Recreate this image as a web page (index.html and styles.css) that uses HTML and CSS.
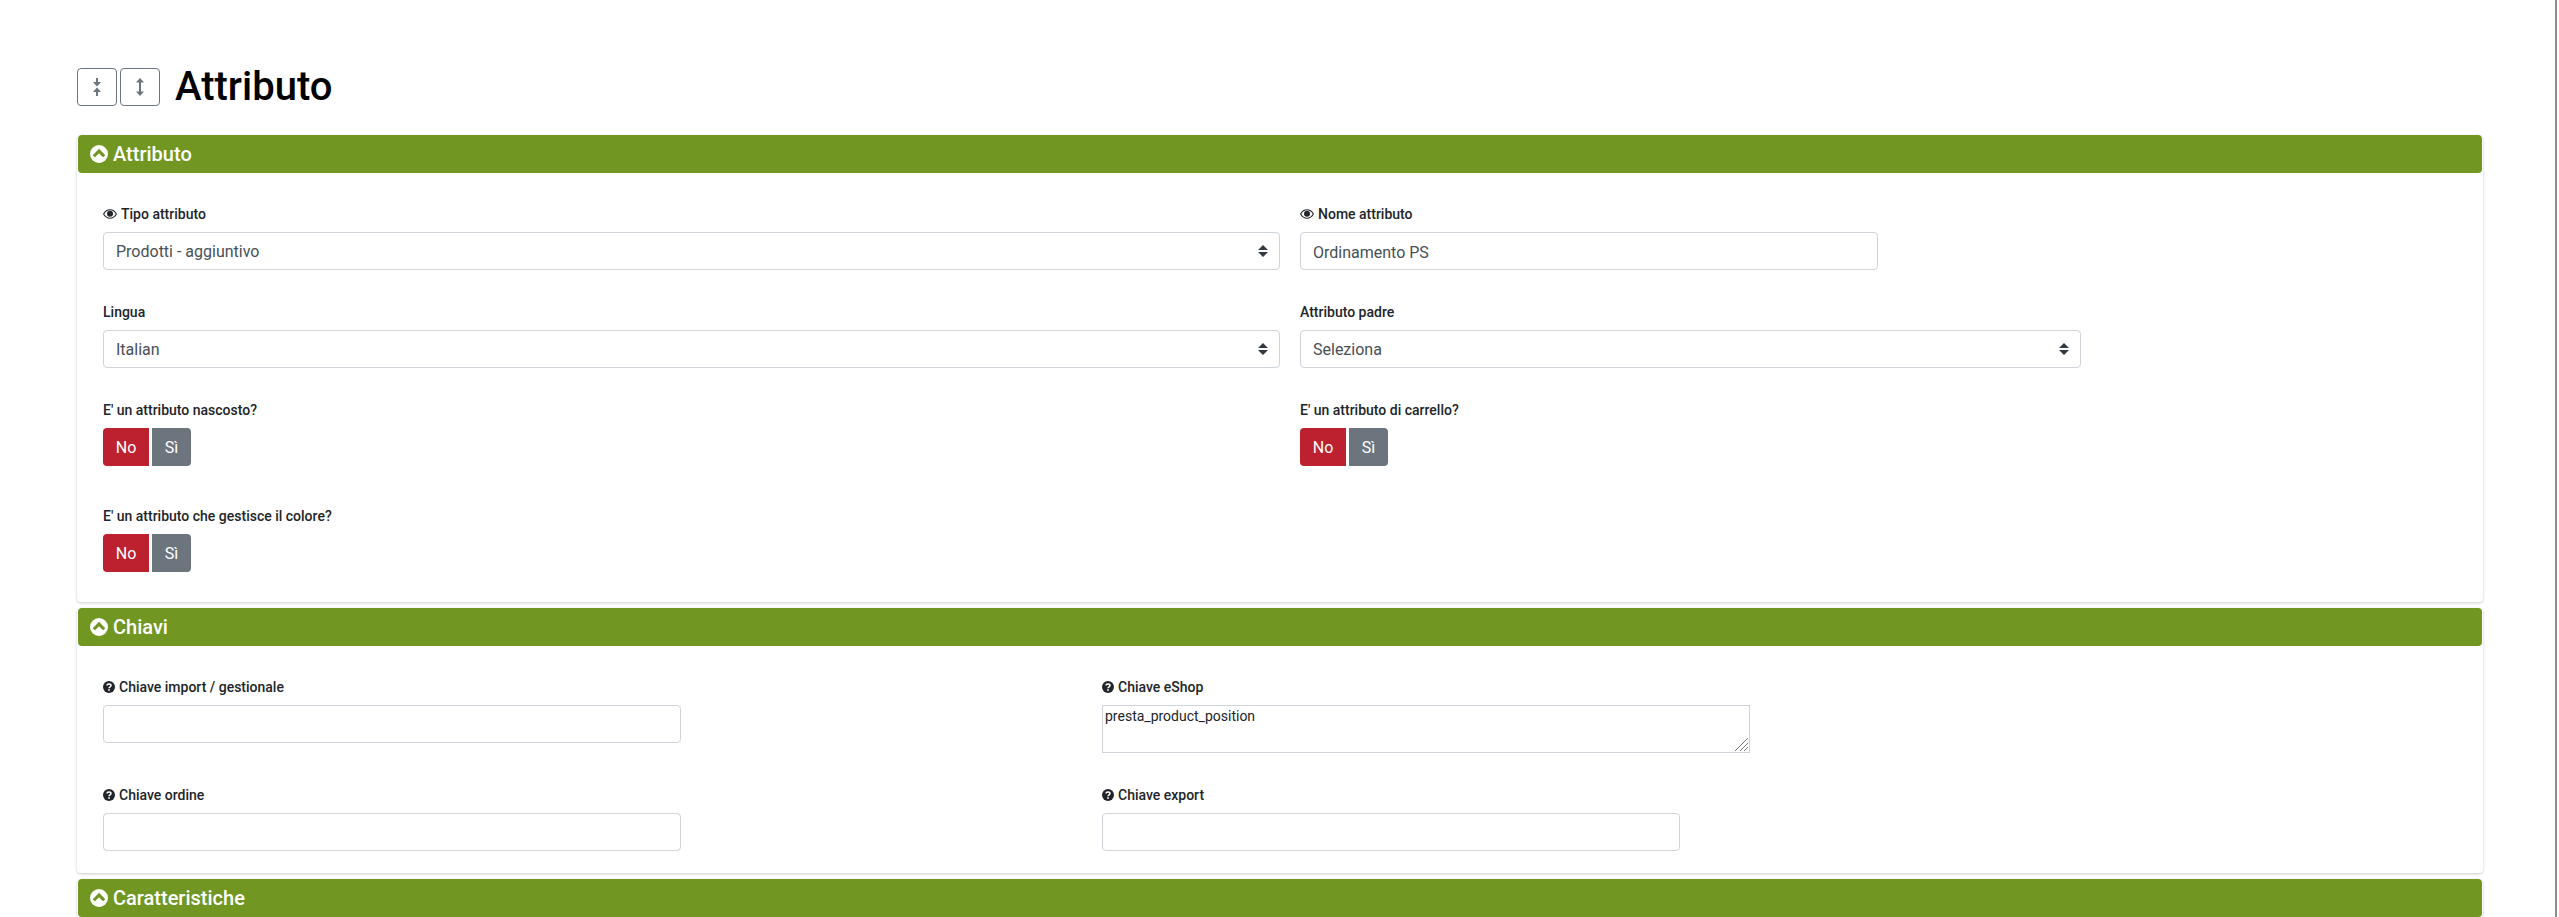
FILE: index.html
```html
<!DOCTYPE html>
<html lang="it">
<head>
    <meta charset="UTF-8">
    <title>Attributo</title>
    <link rel="stylesheet" href="styles.css">
</head>
<body>
<svg class="defs" width="0" height="0">
    <symbol id="i-chevron" viewBox="0 0 16 16">
        <circle cx="8" cy="8" r="8" fill="#fff"/>
        <path d="M3.400 10 8 5.400l4.600 4.600" fill="none" stroke="#719622" stroke-width="2.800"/>
    </symbol>
    <symbol id="i-eye" viewBox="0 0 14 10">
        <path d="M.6 5C2.2 2.2 4.4.8 7 .8s4.800 1.400 6.400 4.200C11.800 7.800 9.600 9.200 7 9.200S2.200 7.800.6 5Z" fill="none" stroke="#212529" stroke-width="1.100"/>
        <circle cx="7" cy="4.800" r="3" fill="#212529"/>
    </symbol>
    <symbol id="i-help" viewBox="0 0 12 12">
        <circle cx="6" cy="6" r="6" fill="#212529"/>
        <path d="M4 4.600C4 3.400 4.900 2.900 6 2.900s2 .6 2 1.600c0 1.500-2 1.300-2 2.800" fill="none" stroke="#fff" stroke-width="1.500"/>
        <rect x="5.200" y="8.200" width="1.600" height="1.600" fill="#fff"/>
    </symbol>
</svg>

<div class="page">
    <div class="title_row">
        <button class="btn_icon" type="button">
            <svg width="8" height="18" viewBox="0 0 8 18"><path d="M4 0v5M4 13v5" stroke="#6c757d" stroke-width="2"/><path d="M0 4h8L4 8.500ZM0 14h8L4 9.500Z" fill="#6c757d"/></svg>
        </button>
        <button class="btn_icon" type="button">
            <svg width="8" height="18" viewBox="0 0 8 18"><path d="M4 4v10" stroke="#6c757d" stroke-width="2"/><path d="M0 4.500h8L4 0ZM0 13.500h8L4 18Z" fill="#6c757d"/></svg>
        </button>
        <h1>Attributo</h1>
    </div>

    <section class="card">
        <h2 class="card_head"><svg class="chevron"><use href="#i-chevron"/></svg>Attributo</h2>
        <div class="card_body grid_main">
            <div class="group">
                <label><svg class="eye"><use href="#i-eye"/></svg>Tipo attributo</label>
                <select class="field"><option>Prodotti - aggiuntivo</option></select>
            </div>
            <div class="group">
                <label><svg class="eye"><use href="#i-eye"/></svg>Nome attributo</label>
                <input class="field w_name" type="text" value="Ordinamento PS">
            </div>
            <div class="group">
                <label>Lingua</label>
                <select class="field"><option>Italian</option></select>
            </div>
            <div class="group">
                <label>Attributo padre</label>
                <select class="field w_parent"><option>Seleziona</option></select>
            </div>
            <div class="group group_toggle">
                <label>E' un attributo nascosto?</label>
                <div class="toggle"><span class="no">No</span><span class="si">Sì</span></div>
            </div>
            <div class="group group_toggle">
                <label>E' un attributo di carrello?</label>
                <div class="toggle"><span class="no">No</span><span class="si">Sì</span></div>
            </div>
            <div class="group group_toggle">
                <label>E' un attributo che gestisce il colore?</label>
                <div class="toggle"><span class="no">No</span><span class="si">Sì</span></div>
            </div>
        </div>
    </section>

    <section class="card">
        <h2 class="card_head"><svg class="chevron"><use href="#i-chevron"/></svg>Chiavi</h2>
        <div class="card_body grid_keys">
            <div class="group_key">
                <label><svg class="help"><use href="#i-help"/></svg>Chiave import / gestionale</label>
                <input class="field w_key" type="text">
            </div>
            <div class="group_key">
                <label><svg class="help"><use href="#i-help"/></svg>Chiave eShop</label>
                <textarea class="area">presta_product_position</textarea>
            </div>
            <div class="group_key">
                <label><svg class="help"><use href="#i-help"/></svg>Chiave ordine</label>
                <input class="field w_key" type="text">
            </div>
            <div class="group_key">
                <label><svg class="help"><use href="#i-help"/></svg>Chiave export</label>
                <input class="field w_export" type="text">
            </div>
        </div>
    </section>

    <section class="card">
        <h2 class="card_head"><svg class="chevron"><use href="#i-chevron"/></svg>Caratteristiche</h2>
    </section>
</div>
</body>
</html>
```

FILE: styles.css
```css
* {
    box-sizing: border-box;
}

html, body {
    height: 100%;
}

body {
    margin: 0;
    height: 917px;
    overflow: hidden;
    background: #fff;
    color: #212529;
    font-family: Roboto, "Liberation Sans", sans-serif;
    font-size: 14px;
    border-right: 2px solid #8f8f8f;
    width: 2557px;
}

.defs {
    display: block;
    height: 0;
}

.page {
    padding: 68px 72px 0 77px;
}

.title_row {
    display: flex;
    align-items: center;
    height: 38px;
    margin-bottom: 29px;
}

.btn_icon {
    display: flex;
    align-items: center;
    justify-content: center;
    width: 40px;
    height: 38px;
    margin-right: 3px;
    padding: 0;
    background: #fff;
    border: 1px solid #6c757d;
    border-radius: 4px;
}

h1 {
    margin: 0 0 0 12px;
    color: #000;
    font-size: 40px;
    font-weight: 500;
    line-height: 44px;
}

.card {
    margin-bottom: 6px;
    background: #fff;
    border-radius: 4px;
    box-shadow: 0 1px 3px rgba(0, 0, 0, 0.2);
}

.card_head {
    display: flex;
    align-items: center;
    height: 38px;
    margin: 0 1px;
    padding: 0 12px;
    background: #719622;
    border-radius: 4px;
    color: #fff;
    font-size: 20px;
    font-weight: 500;
}

.chevron {
    width: 18px;
    height: 18px;
    margin-right: 5px;
}

.card_body {
    padding: 30px 26px 0;
}

.grid_main {
    display: grid;
    grid-template-columns: 1177px 1fr;
    column-gap: 20px;
    height: 429px;
    align-content: start;
}

.grid_keys {
    display: grid;
    grid-template-columns: 999px 1fr;
    height: 227px;
    align-content: start;
}

.group {
    height: 98px;
}

.group_toggle {
    height: 106px;
}

.group_key {
    height: 108px;
}

label {
    display: flex;
    align-items: center;
    height: 20px;
    margin-bottom: 9px;
    padding-top: 2px;
    font-size: 14px;
    font-weight: 500;
}

.eye {
    width: 14px;
    height: 10px;
    margin-right: 4px;
}

.help {
    width: 12px;
    height: 12px;
    margin-right: 4px;
}

.field {
    display: block;
    width: 100%;
    height: 38px;
    padding: 7px 12px 5px;
    background: #fff;
    border: 1px solid #ced4da;
    border-radius: 4px;
    color: #495057;
    font-family: inherit;
    font-size: 16px;
    line-height: 24px;
}

select.field {
    appearance: none;
    -webkit-appearance: none;
    background: #fff url("data:image/svg+xml,%3csvg xmlns='http://www.w3.org/2000/svg' width='10' height='12' viewBox='0 0 10 12'%3e%3cpath fill='%23343a40' d='M5 0 10 5H0ZM5 12 0 7h10Z'/%3e%3c/svg%3e") no-repeat right 11px center;
}

.w_name {
    width: 578px;
}

.w_parent {
    width: 781px;
}

.w_key {
    width: 578px;
}

.w_export {
    width: 578px;
}

.area {
    display: block;
    width: 648px;
    height: 48px;
    padding: 2px;
    border: 1px solid #ced4da;
    color: #212529;
    font-family: inherit;
    font-size: 14px;
}

/* grip piu' grande, come nel browser originale */
.area::-webkit-resizer {
    background: url("data:image/svg+xml,%3csvg xmlns='http://www.w3.org/2000/svg' width='15' height='15'%3e%3cpath stroke='%23777' d='M1 14 14 1M6 14l8-8M10 14l4-4'/%3e%3c/svg%3e");
}

.toggle {
    display: flex;
    gap: 3px;
}

.toggle span {
    display: flex;
    align-items: center;
    justify-content: center;
    height: 38px;
    color: #fff;
    font-size: 16px;
}

.no {
    width: 46px;
    background: #bd2130;
    border-radius: 4px 0 0 4px;
}

.si {
    width: 39px;
    background: #6c757d;
    border-radius: 0 4px 4px 0;
}
```
